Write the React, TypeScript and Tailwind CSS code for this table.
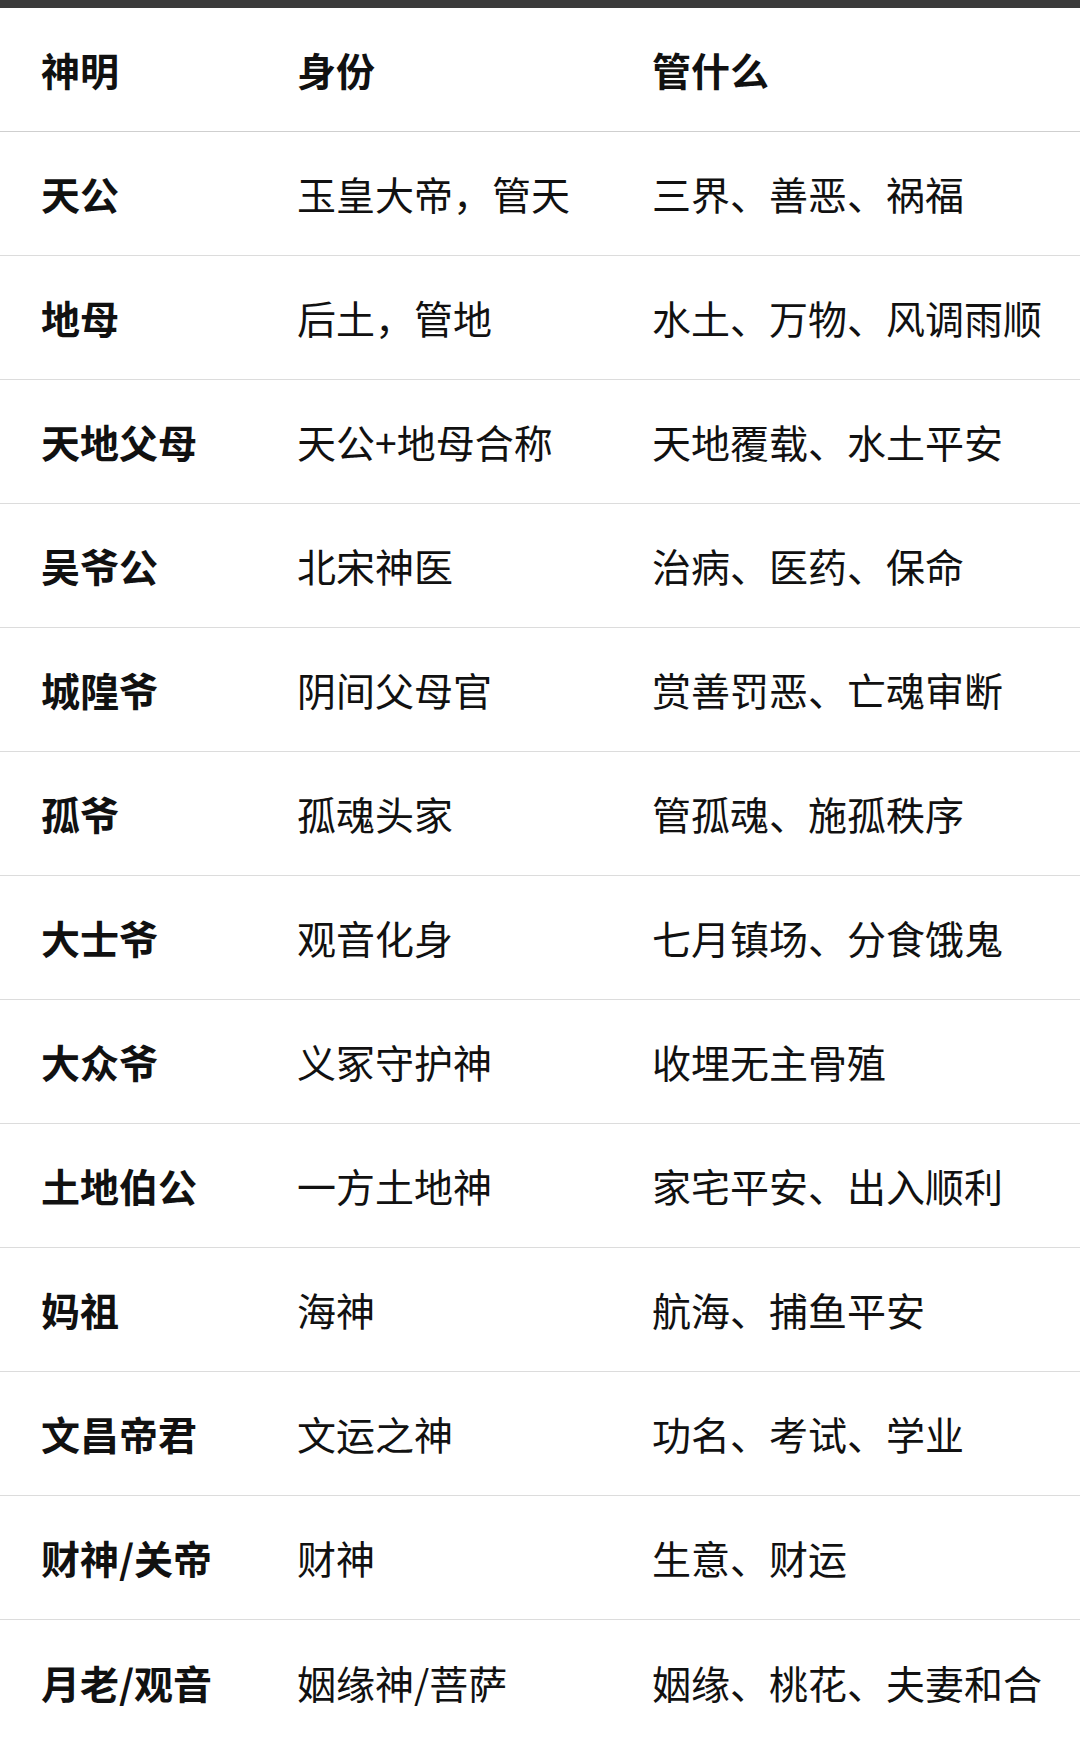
const rows: [string, string, string][] = [
  ["天公", "玉皇大帝，管天", "三界、善恶、祸福"],
  ["地母", "后土，管地", "水土、万物、风调雨顺"],
  ["天地父母", "天公+地母合称", "天地覆载、水土平安"],
  ["吴爷公", "北宋神医", "治病、医药、保命"],
  ["城隍爷", "阴间父母官", "赏善罚恶、亡魂审断"],
  ["孤爷", "孤魂头家", "管孤魂、施孤秩序"],
  ["大士爷", "观音化身", "七月镇场、分食饿鬼"],
  ["大众爷", "义冢守护神", "收埋无主骨殖"],
  ["土地伯公", "一方土地神", "家宅平安、出入顺利"],
  ["妈祖", "海神", "航海、捕鱼平安"],
  ["文昌帝君", "文运之神", "功名、考试、学业"],
  ["财神/关帝", "财神", "生意、财运"],
  ["月老/观音", "姻缘神/菩萨", "姻缘、桃花、夫妻和合"],
];

export default function App() {
  return (
    <div
      className="w-[1080px] h-[1743px] overflow-hidden bg-white text-[#111111]"
      style={{ fontFamily: '"Noto Sans CJK SC", "Noto Sans", sans-serif' }}
    >
      {/* top bar */}
      <div className="h-[8px] bg-[#3b3b3b]" />

      {/* header */}
      <div className="flex h-[124px] items-center border-b border-[#cfcfcf] text-[39px] font-bold leading-none">
        <div className="w-[297px] pl-[41px]">神明</div>
        <div className="w-[355px]">身份</div>
        <div className="flex-1">管什么</div>
      </div>

      {/* body */}
      {rows.map(([god, role, domain], i) => (
        <div
          key={god}
          className={
            i === rows.length - 1
              ? "flex h-[124px] items-center text-[39px] leading-none"
              : "flex h-[124px] items-center border-b border-[#dcdcdc] text-[39px] leading-none"
          }
        >
          <div className="w-[297px] pl-[41px] font-bold whitespace-nowrap">{god}</div>
          <div className="w-[355px] whitespace-nowrap">{role}</div>
          <div className="flex-1 whitespace-nowrap">{domain}</div>
        </div>
      ))}
    </div>
  );
}
